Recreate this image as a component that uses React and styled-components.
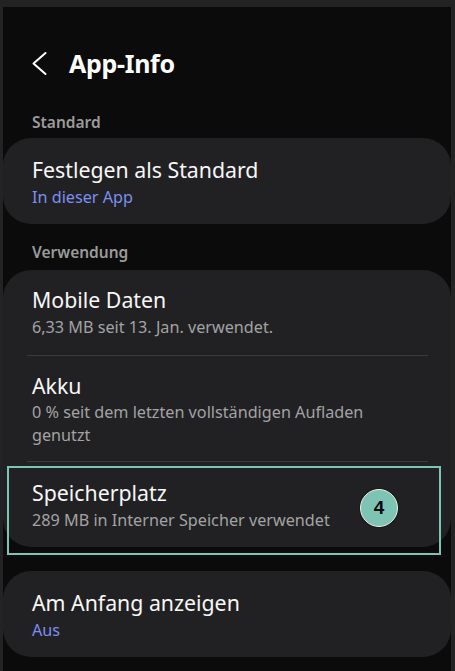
import React from "react";
import styled, { createGlobalStyle } from "styled-components";

const GlobalStyle = createGlobalStyle`
  html, body {
    margin: 0;
    padding: 0;
    background: #232323;
  }
  * {
    box-sizing: border-box;
  }
`;

const Frame = styled.div`
  width: 455px;
  height: 671px;
  padding: 7px 4px 0 3px;
  background: #232323;
  overflow: hidden;
`;

const Screen = styled.div`
  height: 664px;
  background: #0b0b0b;
  font-family: "Noto Sans", "Open Sans", sans-serif;
  color: #f5f5f5;
  display: flex;
  flex-direction: column;
`;

const Header = styled.div`
  display: flex;
  align-items: center;
  height: 36px;
  margin-top: 38px;
  padding-left: 27px;
  gap: 21px;

  h1 {
    margin: 0;
    font-size: 25px;
    line-height: 36px;
    font-weight: 700;
    letter-spacing: -0.3px;
    color: #ffffff;
  }
`;

const SectionLabel = styled.div`
  padding-left: 29px;
  margin-top: ${(p) => p.$top}px;
  height: 18px;
  line-height: 18px;
  font-size: 15.5px;
  font-weight: 600;
  color: #9b9b9b;
`;

const Card = styled.div`
  position: relative;
  margin-top: ${(p) => p.$top}px;
  background: #212123;
  border-radius: 28px;
  padding: 0 23px 0 24px;
`;

const Item = styled.div`
  position: relative;
  padding: ${(p) => p.$pad};
  border-top: ${(p) => (p.$divider ? "1px solid #3a3a3c" : "none")};
`;

const Title = styled.div`
  font-size: 21.3px;
  line-height: 28px;
  color: #f7f7f7;
`;

const Sub = styled.div`
  max-width: 350px;
  font-size: 16.2px;
  line-height: 23px;
  color: ${(p) => (p.$accent ? "#7b8ff2" : "#a3a3a3")};
  margin-top: 1.5px;
`;

const Highlight = styled.div`
  position: absolute;
  left: -20px;
  right: -13px;
  top: 4px;
  bottom: -8px;
  border: 2px solid #7ec4b3;
  pointer-events: none;
`;

const Badge = styled.div`
  position: absolute;
  left: 333px;
  top: 27px;
  width: 38px;
  height: 38px;
  border-radius: 50%;
  background: #7dc4b4;
  border: 1.5px solid #f0f0f0;
  box-shadow: 0 0 0 1px #1a1a1a;
  display: flex;
  align-items: center;
  justify-content: center;
  font-family: "Liberation Sans", Arial, sans-serif;
  font-weight: 700;
  font-size: 19px;
  color: #0a0a14;
`;

function BackIcon() {
  return (
    <svg width="18" height="26" viewBox="0 0 18 26" fill="none">
      <path
        d="M15.5 3 L3.5 13.5 L15.5 24"
        stroke="#ffffff"
        strokeWidth="2"
        strokeLinecap="round"
        strokeLinejoin="round"
      />
    </svg>
  );
}

export default function App() {
  return (
    <>
      <GlobalStyle />
      <Frame>
        <Screen>
          <Header>
            <BackIcon />
            <h1>App-Info</h1>
          </Header>

          <SectionLabel $top={32}>Standard</SectionLabel>
          <Card $top={7}>
            <Item $pad="18px 5px 15.5px">
              <Title>Festlegen als Standard</Title>
              <Sub $accent>In dieser App</Sub>
            </Item>
          </Card>

          <SectionLabel $top={19}>Verwendung</SectionLabel>
          <Card $top={9}>
            <Item $pad="16px 5px 16px">
              <Title>Mobile Daten</Title>
              <Sub>6,33 MB seit 13. Jan. verwendet.</Sub>
            </Item>
            <Item $divider $pad="16px 5px 14px">
              <Title>Akku</Title>
              <Sub>0 % seit dem letzten vollständigen Aufladen genutzt</Sub>
            </Item>
            <Item $divider $pad="17px 5px 15.5px">
              <Title>Speicherplatz</Title>
              <Sub>289 MB in Interner Speicher verwendet</Sub>
              <Highlight />
              <Badge>4</Badge>
            </Item>
          </Card>

          <Card $top={24}>
            <Item $pad="18px 5px 15.5px">
              <Title>Am Anfang anzeigen</Title>
              <Sub $accent>Aus</Sub>
            </Item>
          </Card>
        </Screen>
      </Frame>
    </>
  );
}
